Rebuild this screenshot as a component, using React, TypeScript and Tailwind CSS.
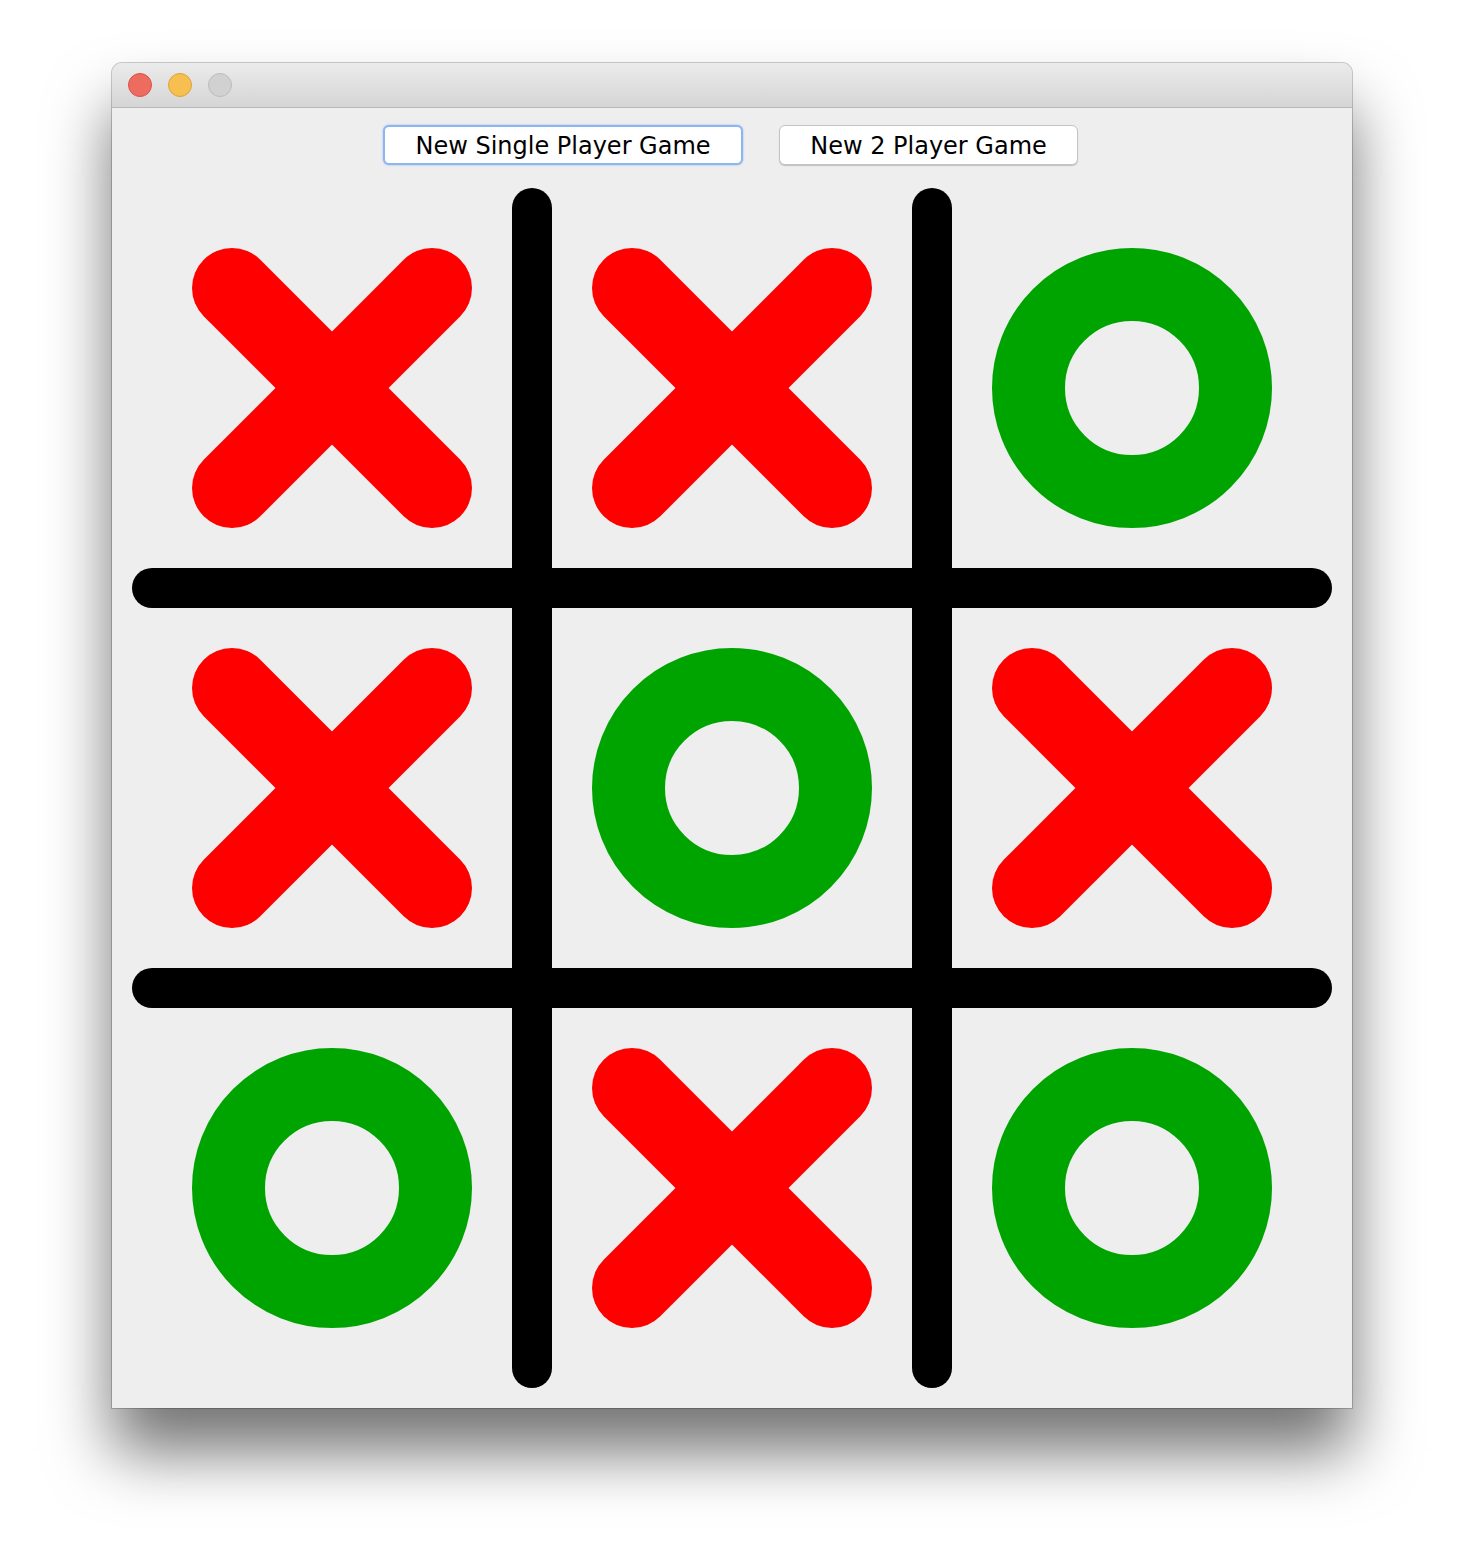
import React from "react";

const BOARD = ["X", "X", "O", "X", "O", "X", "O", "X", "O"];

function Board() {
  return (
    <svg width={1200} height={1200} viewBox="0 0 1200 1200" className="block">
      {[400, 800].map((p) => (
        <g key={p}>
          <line x1={p} y1={20} x2={p} y2={1180} stroke="#000" strokeWidth={40} strokeLinecap="round" />
          <line x1={20} y1={p} x2={1180} y2={p} stroke="#000" strokeWidth={40} strokeLinecap="round" />
        </g>
      ))}
      {BOARD.map((v, i) => {
        const cx = (i % 3) * 400 + 200;
        const cy = Math.floor(i / 3) * 400 + 200;
        if (v === "X") {
          return (
            <g key={i} stroke="#ff0000" strokeWidth={80} strokeLinecap="round">
              <line x1={cx - 100} y1={cy - 100} x2={cx + 100} y2={cy + 100} />
              <line x1={cx + 100} y1={cy - 100} x2={cx - 100} y2={cy + 100} />
            </g>
          );
        }
        return <circle key={i} cx={cx} cy={cy} r={103.5} fill="none" stroke="#00a400" strokeWidth={73} />;
      })}
    </svg>
  );
}

export default function App() {
  return (
    <div className="min-h-[1568px] w-[1464px] bg-white pl-[112px] pt-[63px]">
      <div className="w-[1240px] h-[1345px] rounded-t-[10px] bg-[#eeeeee] shadow-[0_0_0_1px_rgba(0,0,0,0.2),0_44px_64px_rgba(0,0,0,0.55)] flex flex-col">
        <div className="h-[45px] rounded-t-[10px] bg-gradient-to-b from-[#ebebeb] to-[#d5d5d5] border-b border-[#b8b8b8] flex items-center gap-[16px] pl-[16px]">
          <div className="w-[24px] h-[24px] rounded-full bg-[#ed6b5f] border border-[#d9534a]" />
          <div className="w-[24px] h-[24px] rounded-full bg-[#f6bf4f] border border-[#dea33a]" />
          <div className="w-[24px] h-[24px] rounded-full bg-[#d1d1d1] border border-[#bcbcbc]" />
        </div>
        <div className="flex flex-col items-center pt-[17px]">
          <div className="flex gap-[36px] pr-[3px]" style={{ fontFamily: '"DejaVu Sans", Verdana, sans-serif' }}>
            <button className="h-[40px] w-[360px] rounded-[6px] bg-white border-2 border-[#8ab7f0] shadow-[0_0_2px_rgba(80,140,230,0.6)] text-[24px] text-black leading-none pt-[2px]">
              New Single Player Game
            </button>
            <button className="h-[40px] w-[299px] rounded-[6px] bg-white border border-[#c4c4c4] shadow-[0_1px_1px_rgba(0,0,0,0.2)] text-[24px] text-black leading-none pt-[2px]">
              New 2 Player Game
            </button>
          </div>
          <div className="mt-[23px] self-start ml-[20px]">
            <Board />
          </div>
        </div>
      </div>
    </div>
  );
}
